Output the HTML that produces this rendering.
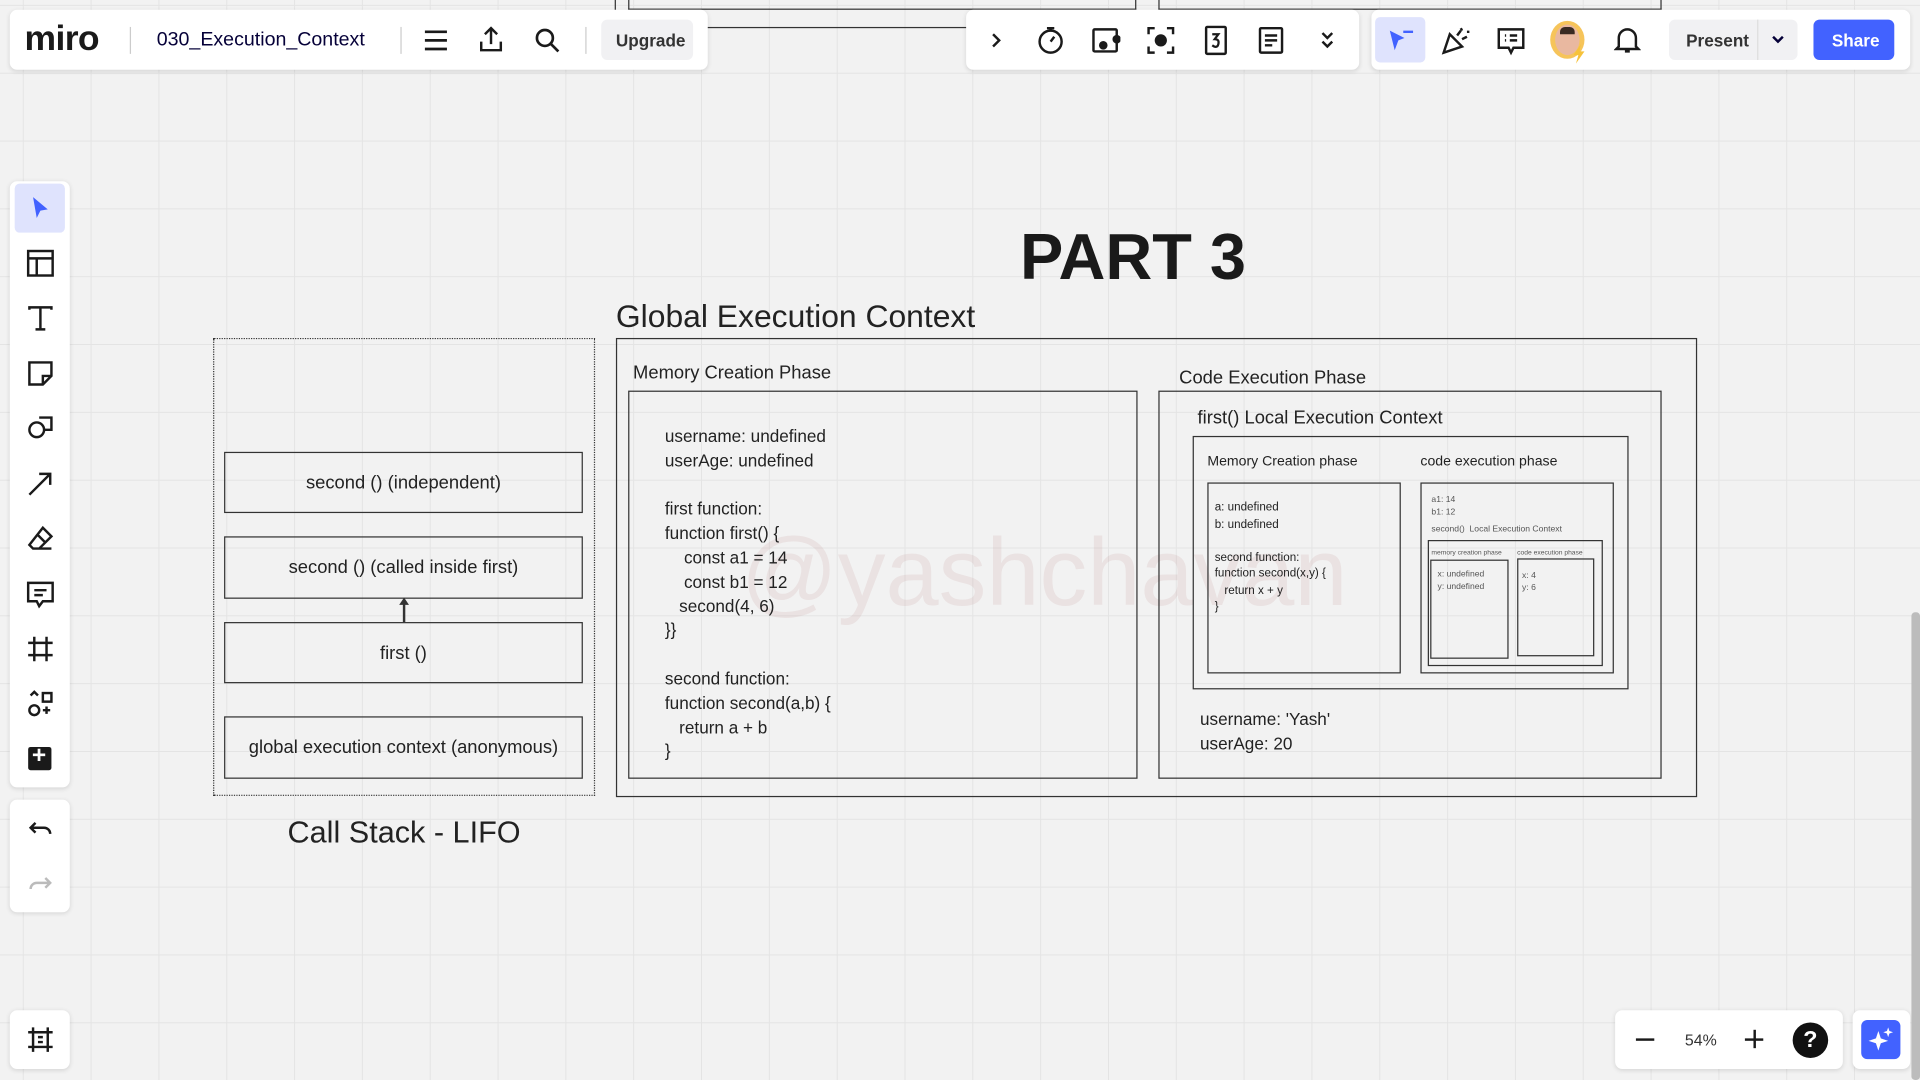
<!DOCTYPE html>
<html><head><meta charset="utf-8"><style>
html,body{margin:0;padding:0;width:1920px;height:1080px;overflow:hidden;background:#f2f2f2;font-family:"Liberation Sans",sans-serif}
#s{position:absolute;left:0;top:0;width:1568px;height:882px;transform:scale(1.22449);transform-origin:0 0;
background-color:#f2f2f2;
background-image:linear-gradient(to right,#e4e4e4 1px,transparent 1px),linear-gradient(to bottom,#e4e4e4 1px,transparent 1px);
background-size:55.4px 55.4px;background-position:18.6px 4px}
.a{position:absolute}
.bar{position:absolute;background:#fff;border-radius:6px;box-shadow:0 1px 4px rgba(0,0,0,.12)}
.bx{position:absolute;border:1.5px solid #333;box-sizing:border-box}
.t{position:absolute;color:#222;white-space:nowrap}
svg{position:absolute}
</style></head><body><div id="s">
<div class="a" style="left:502px;top:0;width:1px;height:22px;background:#333"></div>
<div class="a" style="left:502px;top:22px;width:290px;height:1px;background:#333"></div>
<div class="a" style="left:513px;top:0;width:415px;height:8px;border:1.5px solid #333;border-top:none;box-sizing:border-box"></div>
<div class="a" style="left:946px;top:0;width:411px;height:8px;border:1.5px solid #333;border-top:none;box-sizing:border-box"></div>

<div class="bar" style="left:8px;top:8px;width:570px;height:49px"></div>
<div class="t" style="left:20px;top:16px;font-size:29px;font-weight:bold;color:#1a1a1a;letter-spacing:-0.5px">miro</div>
<div class="a" style="left:106px;top:22px;width:1px;height:22px;background:#ccc"></div>
<div class="t" style="left:128px;top:24px;font-size:16px;color:#050038">030_Execution_Context</div>
<div class="a" style="left:327px;top:22px;width:1px;height:22px;background:#ccc"></div>
<svg style="left:345px;top:22px" width="22" height="22" viewBox="0 0 22 22" stroke="#1a1a1a" stroke-width="2.2" fill="none"><path d="M2 4h18M2 11h18M2 18h18"/></svg>
<svg style="left:390px;top:21px" width="22" height="22" viewBox="0 0 22 22" stroke="#1a1a1a" stroke-width="2" fill="none"><path d="M11 15V2M6 7l5-5 5 5M3 13v7h16v-7"/></svg>
<svg style="left:436px;top:22px" width="22" height="22" viewBox="0 0 22 22" stroke="#1a1a1a" stroke-width="2.2" fill="none"><circle cx="9" cy="9" r="6.5"/><path d="M14 14l6 6"/></svg>
<div class="a" style="left:478px;top:22px;width:1px;height:22px;background:#ccc"></div>
<div class="a" style="left:491px;top:16px;width:75px;height:33px;background:#f1f1f3;border-radius:5px"></div>
<div class="t" style="left:503px;top:25px;font-size:14px;font-weight:bold;color:#333">Upgrade</div>

<div class="bar" style="left:789px;top:8px;width:321px;height:49px"></div>
<svg style="left:805px;top:22px" width="16" height="22" viewBox="0 0 16 22" stroke="#1a1a1a" stroke-width="2" fill="none"><path d="M6 6l5 5-5 5"/></svg>
<svg style="left:846px;top:20px" width="24" height="26" viewBox="0 0 24 26" stroke="#1a1a1a" stroke-width="2" fill="none"><circle cx="12" cy="14" r="9"/><path d="M9 3h6M12 3v2M12 14l3-4"/></svg>
<svg style="left:891px;top:21px" width="24" height="24" viewBox="0 0 24 24" stroke="#1a1a1a" stroke-width="2" fill="none"><rect x="2" y="3" width="19" height="18" rx="1"/><circle cx="10" cy="16" r="2.5" fill="#1a1a1a"/><circle cx="21" cy="11" r="2.5" fill="#1a1a1a"/></svg>
<svg style="left:936px;top:21px" width="24" height="24" viewBox="0 0 24 24" stroke="#1a1a1a" stroke-width="2" fill="none"><path d="M2 7V2h5M17 2h5v5M22 17v5h-5M7 22H2v-5"/><circle cx="12" cy="12" r="4" fill="#1a1a1a"/></svg>
<svg style="left:982px;top:20px" width="22" height="26" viewBox="0 0 22 26" stroke="#1a1a1a" stroke-width="2" fill="none"><rect x="3" y="2" width="16" height="22" rx="1"/><path d="M8 8h5l-3 4q4 0 3 4t-5 1" stroke-width="1.8"/></svg>
<svg style="left:1027px;top:21px" width="22" height="24" viewBox="0 0 22 24" stroke="#1a1a1a" stroke-width="2" fill="none"><rect x="2" y="2" width="18" height="20" rx="1"/><path d="M6 8h10M6 12h10M6 16h6"/></svg>
<svg style="left:1076px;top:22px" width="16" height="22" viewBox="0 0 16 22" stroke="#1a1a1a" stroke-width="2" fill="none"><path d="M4 5l4 4 4-4M4 12l4 4 4-4"/></svg>

<div class="bar" style="left:1120px;top:8px;width:440px;height:49px"></div>
<div class="a" style="left:1123px;top:14px;width:41px;height:37px;background:#dfe3fd;border-radius:4px"></div>
<svg style="left:1132px;top:22px" width="24" height="24" viewBox="0 0 24 24"><path d="M3 3l12 6-5 2-3 8z" fill="#4262ff"/><path d="M14 4h8" stroke="#4262ff" stroke-width="2"/></svg>
<svg style="left:1176px;top:20px" width="26" height="26" viewBox="0 0 26 26" stroke="#1a1a1a" stroke-width="2" fill="none"><path d="M3 23l5-15 10 10z"/><path d="M14 9l3-4M18 12l4-2M17 3l1 2M22 6l2 0"/></svg>
<svg style="left:1222px;top:21px" width="24" height="26" viewBox="0 0 24 26" stroke="#1a1a1a" stroke-width="2" fill="none"><path d="M2 3h20v15H14l-2 4-2-4H2z"/><path d="M7 8h1M11 8h6M7 12h1M11 12h6"/></svg>
<div class="a" style="left:1266px;top:17px;width:28px;height:31px;border-radius:50%;background:#f6c45a"></div>
<div class="a" style="left:1270px;top:20px;width:20px;height:25px;border-radius:50%;background:#e9b8a0"></div>
<div class="a" style="left:1274px;top:22px;width:12px;height:6px;border-radius:4px 4px 0 0;background:#3a2a22"></div>
<svg style="left:1283px;top:36px" width="14" height="16" viewBox="0 0 14 16"><path d="M8 0L2 9h4l-2 7 7-10H7z" fill="#f6c23a"/></svg>
<svg style="left:1318px;top:21px" width="22" height="24" viewBox="0 0 22 24" stroke="#1a1a1a" stroke-width="2" fill="none"><path d="M4 17V10a7 7 0 0114 0v7l2 2H2z M9 21h4"/></svg>
<div class="a" style="left:1363px;top:16px;width:105px;height:33px;background:#f1f1f3;border-radius:5px"></div>
<div class="a" style="left:1435px;top:16px;width:1px;height:33px;background:#ddd"></div>
<div class="t" style="left:1377px;top:25px;font-size:14px;font-weight:bold;color:#333">Present</div>
<svg style="left:1446px;top:27px" width="12" height="10" viewBox="0 0 12 10" stroke="#050038" stroke-width="2" fill="none"><path d="M2 3l4 4 4-4"/></svg>
<div class="a" style="left:1481px;top:16px;width:66px;height:33px;background:#4262ff;border-radius:5px"></div>
<div class="t" style="left:1496px;top:25px;font-size:14px;font-weight:bold;color:#fff">Share</div>

<div class="bar" style="left:8px;top:148px;width:49px;height:495px"></div>
<div class="a" style="left:12px;top:150px;width:41px;height:40px;background:#dfe3fd;border-radius:4px"></div>
<svg style="left:22px;top:159px" width="22" height="22" viewBox="0 0 22 22"><path d="M5 2l12 10-6 1-3 6z" fill="#4262ff"/></svg>
<svg style="left:21px;top:203px" width="24" height="24" viewBox="0 0 24 24" stroke="#1a1a1a" stroke-width="2" fill="none"><rect x="2" y="2" width="20" height="20"/><path d="M2 8h20M9 8v14"/></svg>
<svg style="left:21px;top:248px" width="24" height="24" viewBox="0 0 24 24" stroke="#1a1a1a" stroke-width="2" fill="none"><path d="M3 5V3h18v2M12 3v18M8 21h8"/></svg>
<svg style="left:21px;top:293px" width="24" height="24" viewBox="0 0 24 24" stroke="#1a1a1a" stroke-width="2" fill="none"><path d="M3 3h18v11l-7 7H3z M14 21v-7h7"/></svg>
<svg style="left:21px;top:338px" width="24" height="24" viewBox="0 0 24 24" stroke="#1a1a1a" stroke-width="2" fill="none"><circle cx="9" cy="13" r="6"/><path d="M11 3h10v10H15"/></svg>
<svg style="left:21px;top:383px" width="24" height="24" viewBox="0 0 24 24" stroke="#1a1a1a" stroke-width="2" fill="none"><path d="M3 21L20 4M11 4h9v9"/></svg>
<svg style="left:21px;top:428px" width="24" height="24" viewBox="0 0 24 24" stroke="#1a1a1a" stroke-width="2" fill="none"><path d="M14 3l7 7-10 10H6l-3-3z M9 8l7 7M6 20h15"/></svg>
<svg style="left:21px;top:473px" width="24" height="24" viewBox="0 0 24 24" stroke="#1a1a1a" stroke-width="2" fill="none"><path d="M2 3h20v15H14l-3 4-2-4H2z M7 9h10M7 13h7"/></svg>
<svg style="left:21px;top:518px" width="24" height="24" viewBox="0 0 24 24" stroke="#1a1a1a" stroke-width="2" fill="none"><path d="M7 2v20M17 2v20M2 7h20M2 17h20"/></svg>
<svg style="left:21px;top:563px" width="24" height="24" viewBox="0 0 24 24" stroke="#1a1a1a" stroke-width="2" fill="none"><circle cx="7" cy="17" r="4"/><rect x="14" y="3" width="7" height="7"/><path d="M4 5l3-3 3 3M17 14v6M14 17h6"/></svg>
<div class="a" style="left:23px;top:610px;width:19px;height:19px;background:#1a1a1a;border-radius:2px"></div>
<div class="t" style="left:26px;top:606px;font-size:20px;font-weight:bold;color:#fff">+</div>
<div class="bar" style="left:8px;top:653px;width:49px;height:92px"></div>
<svg style="left:21px;top:666px" width="24" height="24" viewBox="0 0 24 24" stroke="#1a1a1a" stroke-width="2" fill="none"><path d="M4 10h11a5 5 0 015 5M8 6l-4 4 4 4"/></svg>
<svg style="left:21px;top:711px" width="24" height="24" viewBox="0 0 24 24" stroke="#bbb" stroke-width="2" fill="none"><path d="M20 10H9a5 5 0 00-5 5M16 6l4 4-4 4"/></svg>
<div class="bar" style="left:8px;top:825px;width:49px;height:48px"></div>
<svg style="left:21px;top:837px" width="24" height="24" viewBox="0 0 24 24" stroke="#1a1a1a" stroke-width="2" fill="none"><path d="M6 2v20M18 2v20M2 6h20M2 18h20M10 10h4M10 14h4"/></svg>

<div class="bar" style="left:1319px;top:825px;width:186px;height:48px"></div>
<div class="a" style="left:1336px;top:848px;width:15px;height:2px;background:#1a1a1a"></div>
<div class="t" style="left:1376px;top:842px;font-size:13px;color:#333">54%</div>
<div class="a" style="left:1425px;top:848px;width:15px;height:2px;background:#1a1a1a"></div>
<div class="a" style="left:1432px;top:841px;width:2px;height:15px;background:#1a1a1a"></div>
<div class="a" style="left:1464px;top:835px;width:29px;height:29px;background:#111;border-radius:50%;color:#fff;font-weight:bold;font-size:19px;text-align:center;line-height:29px">?</div>
<div class="bar" style="left:1513px;top:825px;width:47px;height:48px"></div>
<div class="a" style="left:1520px;top:833px;width:32px;height:32px;background:#4262ff;border-radius:5px"></div>
<svg style="left:1525px;top:838px" width="22" height="22" viewBox="0 0 22 22" fill="#fff"><path d="M9 4l2 6 6 2-6 2-2 6-2-6-6-2 6-2z"/><path d="M17 1l1 3 3 1-3 1-1 3-1-3-3-1 3-1z"/></svg>
<div class="a" style="left:1561px;top:500px;width:7px;height:382px;background:#bcbcbc;border-radius:3px"></div>

<div class="t" style="left:833px;top:180px;font-size:53px;font-weight:bold;color:#1a1a1a">PART 3</div>
<div class="t" style="left:503px;top:243px;font-size:26px">Global Execution Context</div>

<div class="a" style="left:174px;top:276px;width:312px;height:374px;border:1px dotted #333;box-sizing:border-box"></div>
<div class="bx" style="left:183px;top:369px;width:293px;height:50px"></div>
<div class="t" style="left:183px;top:386px;width:293px;text-align:center;font-size:15px">second () (independent)</div>
<div class="bx" style="left:183px;top:438px;width:293px;height:51px"></div>
<div class="t" style="left:183px;top:455px;width:293px;text-align:center;font-size:15px">second () (called inside first)</div>
<div class="bx" style="left:183px;top:508px;width:293px;height:50px"></div>
<div class="t" style="left:183px;top:525px;width:293px;text-align:center;font-size:15px">first ()</div>
<div class="bx" style="left:183px;top:585px;width:293px;height:51px"></div>
<div class="t" style="left:183px;top:602px;width:293px;text-align:center;font-size:15px">global execution context (anonymous)</div>
<div class="a" style="left:329px;top:491px;width:1.5px;height:17px;background:#333"></div>
<svg style="left:325px;top:488px" width="10" height="8"><path d="M5 0L1 6h8z" fill="#333"/></svg>
<div class="t" style="left:174px;top:666px;width:312px;text-align:center;font-size:25px">Call Stack - LIFO</div>

<div class="t" style="left:605px;top:422px;font-size:78px;color:rgba(190,140,140,0.16)">@yashchavan</div>

<div class="bx" style="left:503px;top:276px;width:883px;height:375px"></div>
<div class="t" style="left:517px;top:296px;font-size:15px">Memory Creation Phase</div>
<div class="bx" style="left:513px;top:319px;width:416px;height:317px"></div>
<div class="t" style="left:543px;top:347px;font-size:14px;line-height:19.8px">username: undefined<br>userAge: undefined<br><br>first function:<br>function first() {<br>&nbsp;&nbsp;&nbsp;&nbsp;const a1 = 14<br>&nbsp;&nbsp;&nbsp;&nbsp;const b1 = 12<br>&nbsp;&nbsp;&nbsp;second(4, 6)<br>}}<br><br>second function:<br>function second(a,b) {<br>&nbsp;&nbsp;&nbsp;return a + b<br>}</div>

<div class="t" style="left:963px;top:300px;font-size:15px">Code Execution Phase</div>
<div class="bx" style="left:946px;top:319px;width:411px;height:317px"></div>
<div class="t" style="left:978px;top:333px;font-size:15px">first() Local Execution Context</div>
<div class="bx" style="left:974px;top:356px;width:356px;height:207px"></div>
<div class="t" style="left:986px;top:371px;font-size:11.5px">Memory Creation phase</div>
<div class="t" style="left:1160px;top:371px;font-size:11.5px">code execution phase</div>
<div class="bx" style="left:986px;top:394px;width:158px;height:156px"></div>
<div class="t" style="left:992px;top:408px;font-size:9.5px;line-height:13.5px">a: undefined<br>b: undefined<br><br>second function:<br>function second(x,y) {<br>&nbsp;&nbsp;&nbsp;return x + y<br>}</div>
<div class="bx" style="left:1160px;top:394px;width:158px;height:156px"></div>
<div class="t" style="left:1169px;top:404px;font-size:7px;line-height:10px;color:#555">a1: 14<br>b1: 12</div>
<div class="t" style="left:1169px;top:429px;font-size:7px;color:#555">second()&nbsp; Local Execution Context</div>
<div class="bx" style="left:1166px;top:441px;width:143px;height:103px"></div>
<div class="t" style="left:1169px;top:449px;font-size:5.5px;color:#555">memory creation phase</div>
<div class="t" style="left:1239px;top:449px;font-size:5.5px;color:#555">code execution phase</div>
<div class="bx" style="left:1168px;top:457px;width:64px;height:81px"></div>
<div class="t" style="left:1174px;top:465px;font-size:7px;line-height:10px;color:#555">x: undefined<br>y: undefined</div>
<div class="bx" style="left:1239px;top:456px;width:63px;height:80px"></div>
<div class="t" style="left:1243px;top:466px;font-size:7px;line-height:10px;color:#555">x: 4<br>y: 6</div>
<div class="t" style="left:980px;top:577px;font-size:14px;line-height:20px">username: 'Yash'<br>userAge: 20</div>
</div></body></html>
